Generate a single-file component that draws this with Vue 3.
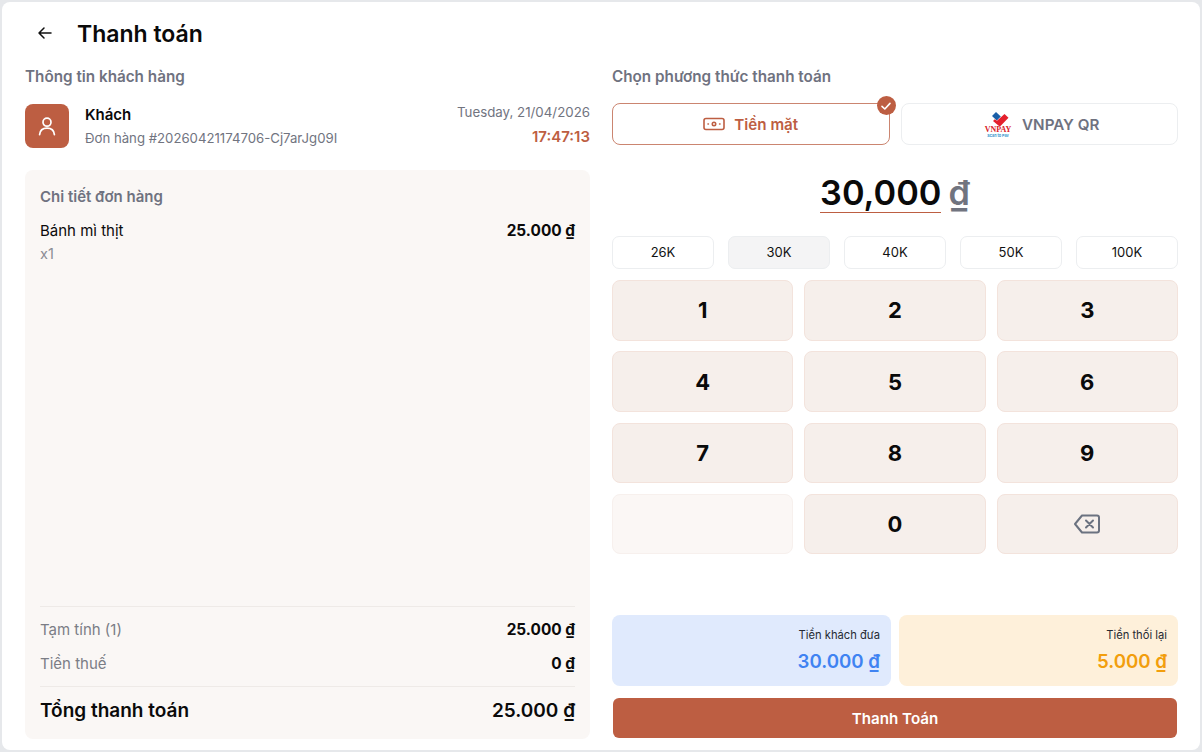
<template>
  <div class="page">
    <header class="top">
      <button class="back">
        <svg width="16" height="16" viewBox="0 0 16 16" fill="none" stroke="#111" stroke-width="1.5" stroke-linecap="round" stroke-linejoin="round"><path d="M14 8H2.500M7 3 2 8l5 5" /></svg>
      </button>
      <h1>Thanh toán</h1>
    </header>

    <div class="cols">
      <section class="left">
        <h2 class="label">Thông tin khách hàng</h2>
        <div class="customer">
          <div class="avatar">
            <svg width="20" height="20" viewBox="0 0 20 20" fill="none" stroke="#fff" stroke-width="1.7" stroke-linecap="round"><circle cx="10" cy="6.200" r="4" /><path d="M2.600 18.600c.4-4.400 3.400-6.400 7.400-6.400s7 2 7.400 6.400" /></svg>
          </div>
          <div class="who">
            <div class="name">Khách</div>
            <div class="order-no">Đơn hàng #20260421174706-Cj7arJg09I</div>
          </div>
          <div class="when">
            <div class="date">Tuesday, 21/04/2026</div>
            <div class="time">17:47:13</div>
          </div>
        </div>

        <div class="panel">
          <h3 class="panel-title">Chi tiết đơn hàng</h3>
          <div class="item">
            <div class="item-row">
              <span>Bánh mì thịt</span>
              <b>25.000 ₫</b>
            </div>
            <div class="qty">x1</div>
          </div>
          <div class="totals">
            <div class="line"><span>Tạm tính (1)</span><b>25.000 ₫</b></div>
            <div class="line"><span>Tiền thuế</span><b>0 ₫</b></div>
            <div class="grand"><span>Tổng thanh toán</span><span>25.000 ₫</span></div>
          </div>
        </div>
      </section>

      <section class="right">
        <h2 class="label">Chọn phương thức thanh toán</h2>
        <div class="methods">
          <button class="method active">
            <svg width="22" height="14" viewBox="0 0 22 14" fill="none" stroke="#bd5e42" stroke-width="1.600" stroke-linecap="round"><rect x="1" y="1.500" width="20" height="11" rx="2" /><circle cx="11" cy="7" r="1.700" /><path d="M5 7h.4M16.600 7h.4" /></svg>
            Tiền mặt
            <span class="tick">
              <svg width="12" height="12" viewBox="0 0 12 12" fill="none" stroke="#fff" stroke-width="1.600" stroke-linecap="round" stroke-linejoin="round"><path d="M2 6.400 4.800 9 10 3.400" /></svg>
            </span>
          </button>
          <button class="method">
            <svg class="vnpay" width="30" height="26" viewBox="0 0 30 26">
              <path d="M9 5 13 1l4.800 4.600-4 4z" fill="#1a5fa8" />
              <path d="M14 9.800 21.500 3 25.500 6.800l-7.500 7.600a2 2 0 0 1-2.600 0L10 10l1.800-1.800z" fill="#e4202c" />
              <text x="15" y="21" text-anchor="middle" font-size="8" font-weight="700" fill="#d8232a" font-family="Liberation Serif, serif">VNPAY</text>
              <text x="15" y="25.500" text-anchor="middle" font-size="3.800" fill="#1a8bc9" font-family="Inter, sans-serif">Scan to Pay</text>
            </svg>
            VNPAY QR
          </button>
        </div>

        <div class="amount">
          <span class="value">30,000</span>
          <span class="cur">₫</span>
        </div>

        <div class="quick">
          <button v-for="q in quick" :key="q" :class="{ on: q === '30K' }">{{ q }}</button>
        </div>

        <div class="pad">
          <button v-for="k in keys" :key="k">{{ k }}</button>
          <button class="blank"></button>
          <button>0</button>
          <button>
            <svg width="28" height="20" viewBox="0 0 28 20" fill="none" stroke="#6b7280" stroke-width="2" stroke-linejoin="round" stroke-linecap="round"><path d="M9 1.500h15a2 2 0 0 1 2 2v13a2 2 0 0 1-2 2H9l-7-8.500z" /><path d="m13 6.500 7 7M20 6.500l-7 7" /></svg>
          </button>
        </div>

        <div class="summary">
          <div class="box blue">
            <div class="box-label">Tiền khách đưa</div>
            <div class="box-value">30.000 ₫</div>
          </div>
          <div class="box amber">
            <div class="box-label">Tiền thối lại</div>
            <div class="box-value">5.000 ₫</div>
          </div>
        </div>

        <button class="pay">Thanh Toán</button>
      </section>
    </div>
  </div>
</template>

<script setup>
const quick = ['26K', '30K', '40K', '50K', '100K']
const keys = ['1', '2', '3', '4', '5', '6', '7', '8', '9']
</script>

<style>
body {
  margin: 0;
  background: #e6e8eb;
}
</style>

<style scoped>
.page {
  box-sizing: border-box;
  width: 1198px;
  height: 748px;
  margin: 2px;
  padding: 0 23px 11px;
  background: #fff;
  border-radius: 8px;
  display: flex;
  flex-direction: column;
  font-family: Inter, "Noto Sans", sans-serif;
  color: #0a0a0a;
}
button {
  font-family: inherit;
  cursor: pointer;
  padding: 0;
}
.top {
  display: flex;
  align-items: center;
  height: 62px;
  flex: none;
}
.back {
  width: 40px;
  height: 40px;
  border: 0;
  background: none;
  display: flex;
  align-items: center;
  justify-content: center;
}
h1 {
  margin: 1px 0 0 12px;
  font-size: 23px;
  font-weight: 600;
}
.cols {
  flex: 1;
  min-height: 0;
  display: flex;
  gap: 22px;
}
.left {
  width: 565px;
  flex: none;
  display: flex;
  flex-direction: column;
}
.right {
  width: 566px;
  flex: none;
  display: flex;
  flex-direction: column;
}
.label {
  margin: 0;
  height: 26px;
  line-height: 26px;
  font-size: 15.250px;
  font-weight: 600;
  color: #6f7280;
}
.customer {
  margin-top: 14px;
  display: flex;
  align-items: center;
  height: 44px;
}
.avatar {
  width: 44px;
  height: 44px;
  border-radius: 8px;
  background: #bd5e42;
  display: flex;
  align-items: center;
  justify-content: center;
}
.who {
  margin-left: 16px;
  flex: 1;
}
.name {
  font-size: 15px;
  font-weight: 600;
  line-height: 20px;
}
.order-no {
  margin-top: 4px;
  font-size: 13.200px;
  line-height: 18px;
  color: #71747f;
}
.when {
  text-align: right;
}
.date {
  font-size: 13.300px;
  line-height: 18px;
  color: #71747f;
  margin-top: -2px;
}
.time {
  margin-top: 6px;
  font-size: 15px;
  line-height: 20px;
  font-weight: 600;
  color: #bd5e42;
}
.panel {
  margin-top: 22px;
  flex: 1;
  box-sizing: border-box;
  padding: 17px 15px 10px;
  background: #faf7f5;
  border-radius: 8px;
  display: flex;
  flex-direction: column;
}
.panel-title {
  margin: 0;
  font-size: 15px;
  line-height: 20px;
  font-weight: 600;
  color: #6f7280;
}
.item {
  margin-top: 14px;
  flex: 1;
}
.item-row {
  display: flex;
  justify-content: space-between;
  font-size: 15px;
  line-height: 20px;
}
.item-row b, .line b {
  font-size: 15.400px;
  font-weight: 700;
}
.qty {
  margin-top: 3px;
  font-size: 14.500px;
  line-height: 20px;
  color: #8a8c94;
}
.totals {
  border-top: 1px solid #eeeae7;
}
.line {
  display: flex;
  justify-content: space-between;
  align-items: center;
  height: 34px;
  font-size: 15px;
  color: #7b7d85;
}
.line:first-child {
  margin-top: 5px;
}
.line b {
  color: #0a0a0a;
}
.grand {
  margin-top: 6px;
  padding-top: 12px;
  border-top: 1px solid #eeeae7;
  display: flex;
  justify-content: space-between;
  font-size: 19px;
  line-height: 24px;
  font-weight: 600;
  height: 30px;
}
.methods {
  margin-top: 13px;
  display: flex;
  gap: 11px;
}
.method {
  position: relative;
  flex: 1;
  height: 42px;
  border: 1.500px solid #eceef0;
  border-radius: 8px;
  background: #fff;
  display: flex;
  align-items: center;
  justify-content: center;
  gap: 9px;
  font-size: 15.200px;
  font-weight: 600;
  color: #6f7280;
}
.method.active {
  border-color: #cb8570;
  color: #bd5e42;
}
.vnpay {
  margin-left: 4px;
}
.tick {
  position: absolute;
  top: -8px;
  right: -7px;
  width: 19px;
  height: 19px;
  border-radius: 50%;
  background: #bd5e42;
  display: flex;
  align-items: center;
  justify-content: center;
}
.amount {
  margin-top: 28px;
  height: 40px;
  display: flex;
  justify-content: center;
  align-items: flex-start;
  gap: 7px;
  font-size: 34.300px;
  line-height: 40px;
  font-weight: 600;
}
.value {
  border-bottom: 1px solid #bd5e42;
  height: 39px;
}
.cur {
  color: #71747f;
}
.quick {
  margin-top: 23px;
  display: flex;
  justify-content: space-between;
}
.quick button {
  width: 102px;
  height: 33px;
  padding-bottom: 1px;
  border: 1px solid #eceef0;
  border-radius: 7px;
  background: #fff;
  font-size: 13px;
  color: #111;
}
.quick button.on {
  background: #f4f4f5;
}
.pad {
  margin-top: 11px;
  display: grid;
  grid-template-columns: repeat(3, 1fr);
  grid-auto-rows: 60.500px;
  gap: 10.800px;
}
.pad button {
  border: 1px solid #f3e3dc;
  border-radius: 8px;
  background: #f6efeb;
  font-size: 22px;
  font-weight: 700;
  color: #0a0a0a;
  display: flex;
  align-items: center;
  justify-content: center;
}
.pad button.blank {
  background: #fbf7f5;
  border-color: #f7f0ed;
}
.summary {
  margin-top: auto;
  display: flex;
  gap: 8px;
}
.box {
  flex: 1;
  height: 71px;
  box-sizing: border-box;
  padding: 12px 11px 0;
  border-radius: 8px;
  text-align: right;
}
.blue {
  background: #e0eafd;
  color: #3f83f2;
}
.amber {
  background: #fef0da;
  color: #f29e0d;
}
.box-label {
  font-size: 11.200px;
  line-height: 16px;
  color: #262a33;
}
.box-value {
  margin-top: 6px;
  font-size: 18.700px;
  line-height: 26px;
  font-weight: 600;
}
.pay {
  flex: none;
  margin: 12px 1px 1px;
  height: 40px;
  border: 0;
  border-radius: 6px;
  background: #bd5e42;
  color: #fff;
  font-size: 15.200px;
  font-weight: 600;
}
</style>
